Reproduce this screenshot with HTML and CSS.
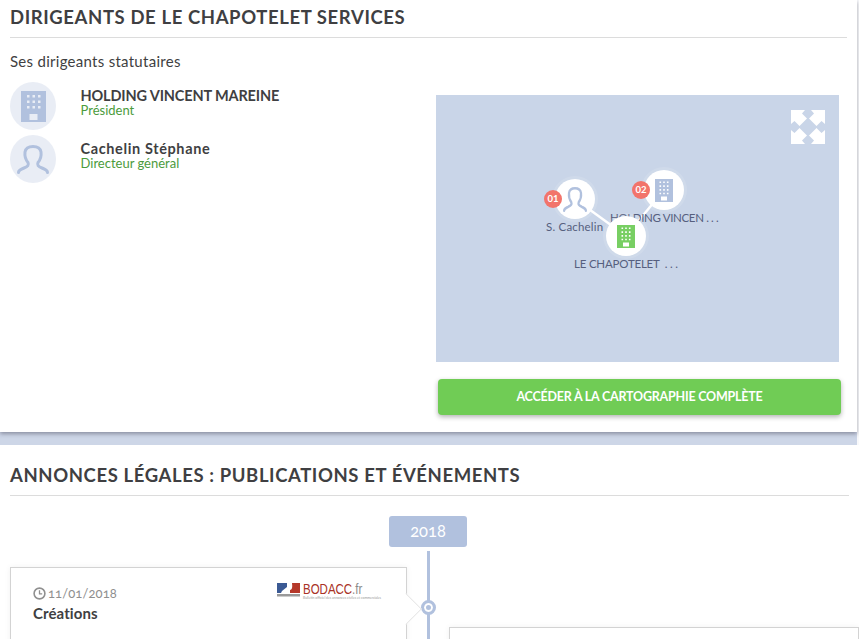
FILE: index.html
```html
<!DOCTYPE html>
<html lang="fr">
<head>
<meta charset="utf-8">
<title>Dirigeants</title>
<link rel="stylesheet" href="styles.css">
</head>
<body>
<svg class="defs" width="0" height="0" aria-hidden="true">
  <defs>
    <g id="building">
      <path d="M0 0H25V31H0Z M6 4v2.500h2.500V4Z M11.500 4v2.500h2.500V4Z M17 4v2.500h2.500V4Z M6 9.500v2.500h2.500V9.500Z M11.500 9.500v2.500h2.500V9.500Z M17 9.500v2.500h2.500V9.500Z M6 15v2.500h2.500V15Z M11.500 15v2.500h2.500V15Z M17 15v2.500h2.500V15Z M8.500 23v6h8v-6Z" fill-rule="evenodd"/>
    </g>
    <g id="building-small">
      <path d="M0 0H18V23H0Z M4.500 2.500v1.600h1.600V2.500Z M8.200 2.500v1.600h1.600V2.500Z M11.900 2.500v1.600h1.600V2.500Z M4.500 6.300v1.600h1.600V6.300Z M8.200 6.300v1.600h1.600V6.300Z M11.900 6.300v1.600h1.600V6.300Z M4.500 10.100v1.600h1.600v-1.600Z M8.200 10.100v1.600h1.600v-1.600Z M11.900 10.100v1.600h1.600v-1.600Z M4.500 13.700v1.600h1.600v-1.600Z M8.200 13.700v1.600h1.600v-1.600Z M11.900 13.700v1.600h1.600v-1.600Z M6 17.500v4h6v-4Z" fill-rule="evenodd"/>
    </g>
    <g id="person">
      <path d="M1.500 27.500 C1.500 25 3.500 24.500 7 23 C11 21.500 12 20 11 17.500 C8.500 14.500 7.500 11 8 7 C8.700 3 11.500 1.500 16 1.500 C20.500 1.500 23.300 3 24 7 C24.500 11 23.500 14.500 21 17.500 C20 20 21 21.500 25 23 C28.500 24.500 30.500 25 30.500 27.500" fill="none" stroke-width="3" stroke-linecap="round" stroke-linejoin="round"/>
    </g>
  </defs>
</svg>
<section class="panel panel-top">
  <h2 class="title">DIRIGEANTS DE LE CHAPOTELET SERVICES</h2>
  <div class="columns">
    <div class="col-left">
      <p class="lead">Ses dirigeants statutaires</p>
      <div class="person">
        <div class="avatar"><svg class="ic-building" width="25" height="31" viewBox="0 0 25 31"><use href="#building"/></svg></div>
        <div class="who"><div class="name">HOLDING VINCENT MAREINE</div><div class="role">Président</div></div>
      </div>
      <div class="person">
        <div class="avatar"><svg class="ic-person" width="32" height="29" viewBox="0 0 32 29"><use href="#person"/></svg></div>
        <div class="who"><div class="name name-mixed">Cachelin Stéphane</div><div class="role">Directeur général</div></div>
      </div>
    </div>
    <div class="col-right">
      <div class="map">
        <svg class="expand" width="34" height="34" viewBox="0 0 34 34"><path d="M0 0H14L11 3.500L16 8.500L8.500 16L3.500 11L0 14Z M34 0H20L23 3.500L18 8.500L25.500 16L30.500 11L34 14Z M0 34H14L11 30.500L16 25.500L8.500 18L3.500 23L0 20Z M34 34H20L23 30.500L18 25.500L25.500 18L30.500 23L34 20Z"/></svg>
        <svg class="links" width="403" height="267" viewBox="0 0 403 267"><path d="M139 104L190 141M228 95L190 141"/></svg>
        <div class="label caps l-holding">HOLDING VINCEN . . .</div>
        <div class="label l-cachelin">S. Cachelin</div>
        <div class="node n-cachelin"><svg class="ic-person" width="24" height="25" viewBox="0 0 32 29" preserveAspectRatio="none"><use href="#person"/></svg></div>
        <div class="node n-holding"><svg class="ic-building" width="18" height="23" viewBox="0 0 18 23"><use href="#building-small"/></svg></div>
        <div class="node n-center"><svg class="ic-green" width="18" height="23" viewBox="0 0 18 23"><use href="#building-small"/></svg></div>
        <div class="badge b-01">01</div>
        <div class="badge b-02">02</div>
        <div class="label caps-center l-center">LE CHAPOTELET &nbsp;. . .</div>
      </div>
      <a class="cta">ACCÉDER À LA CARTOGRAPHIE COMPLÈTE</a>
    </div>
  </div>
</section>
<div class="band"></div>
<section class="panel panel-bottom">
  <h2 class="title">ANNONCES LÉGALES : PUBLICATIONS ET ÉVÉNEMENTS</h2>
  <div class="timeline">
    <div class="year">2018</div>
    <div class="rail"></div>
    <div class="dot"></div>
    <article class="event event-left">
      <div class="event-head">
        <div class="date">
          <svg width="13" height="13" viewBox="0 0 13 13"><circle cx="6.500" cy="6.500" r="5.400" fill="none" stroke="#8f8f8f" stroke-width="1.600"/><path d="M6.500 3.200V6.800H9.200" fill="none" stroke="#8f8f8f" stroke-width="1.300"/></svg>
          <span>11/01/2018</span>
        </div>
        <div class="bodacc">
          <svg width="23" height="14" viewBox="0 0 23 14"><rect width="10" height="10" fill="#3b5a94"/><path d="M5 8L10 4V10H4Z" fill="#fff"/><path d="M15 0H23V10H13V7Q16 7 15 0Z" fill="#b5382a"/><rect y="11" width="23" height="2.500" fill="#9a9a9a"/></svg>
          <div class="bodacc-text"><div class="bodacc-word"><b>BODACC</b><span>.fr</span></div><div class="bodacc-sub">Bulletin officiel des annonces civiles et commerciales</div></div>
        </div>
      </div>
      <div class="event-title">Créations</div>
      <div class="arrow"></div>
    </article>
    <article class="event event-right"></article>
  </div>
</section>
</body>
</html>
```
FILE: styles.css
```css
* { box-sizing: border-box; }
html, body { margin: 0; height: 639px; overflow: hidden; }
body { background: #f8f9fb; font-family: "Lato", "Liberation Sans", sans-serif; color: #3f3f42; }
.defs { position: absolute; }
.panel { background: #fff; width: 857px; padding: 0 10px; }
.panel-top { height: 432px; box-shadow: 0 2px 4px rgba(60,60,80,.45); position: relative; }
.band { width: 857px; height: 13px; background: #cdd6e7; }
.panel-bottom { height: 194px; width: 859px; }
.title { margin: 0; height: 38px; padding-top: 6px; border-bottom: 1px solid #dcdcdc; font-size: 18.500px; line-height: 22px; font-weight: 700; letter-spacing: .6px; white-space: nowrap; }
.panel-bottom .title { height: 51px; padding-top: 19px; }
.columns { display: flex; }
.col-left { width: 426px; }
.lead { margin: 14px 0 12px; font-size: 15px; line-height: 18px; letter-spacing: .28px; }
.person { display: flex; height: 53px; }
.avatar { width: 46px; height: 48px; border-radius: 50%; background: #e9edf5; display: flex; align-items: center; justify-content: center; margin-right: 25px; flex: none; }
.ic-building { fill: #b1c1de; }
.ic-person { stroke: #b1c1de; }
.ic-green { fill: #78cf63; }
.who { padding-top: 5px; margin-left: -.5px; }
.name { font-size: 14.500px; line-height: 17px; font-weight: 700; letter-spacing: -.15px; white-space: nowrap; }
.name-mixed { letter-spacing: .62px; }
.role { font-size: 13px; line-height: 13px; color: #4b9b3c; }
.col-right { width: 405px; padding-top: 57px; }
.map { position: relative; width: 403px; height: 267px; background: #c9d5e8; overflow: hidden; }
.expand { position: absolute; left: 355px; top: 15px; fill: #fff; }
.links { position: absolute; left: 0; top: 0; stroke: #fff; stroke-width: 2.500; fill: none; }
.node { position: absolute; width: 40px; height: 40px; border-radius: 50%; background: #fff; display: flex; align-items: center; justify-content: center; box-shadow: 0 0 0 3px rgba(255,255,255,.12); }
.n-cachelin { left: 119px; top: 84px; }
.n-holding { left: 208px; top: 75px; }
.n-center { left: 170px; top: 121px; }
.badge { position: absolute; width: 18px; height: 18px; border-radius: 50%; background: #f2746b; color: #fff; font-size: 9.500px; line-height: 18px; font-weight: 700; text-align: center; }
.b-01 { left: 108px; top: 95px; }
.b-02 { left: 196px; top: 86px; }
.label { position: absolute; font-size: 11.500px; line-height: 14px; color: #565f7e; white-space: nowrap; letter-spacing: .2px; }
.caps { letter-spacing: -.35px; }
.caps-center { letter-spacing: -.2px; }
.l-holding { left: 174px; top: 116px; }
.l-cachelin { left: 110px; top: 125px; }
.l-center { left: 138px; top: 162px; }
.cta { display: block; margin: 17px 0 0 2px; width: 403px; height: 36px; border-radius: 4px; background: #70cc55; color: #fff; font-size: 12.500px; line-height: 36px; font-weight: 700; text-align: center; letter-spacing: -.22px; box-shadow: 0 2px 5px rgba(0,0,0,.3); white-space: nowrap; }
.timeline { position: relative; height: 143px; }
.year { position: absolute; left: 379px; top: 20px; width: 78px; height: 31px; border-radius: 3px; background: #b1c1de; color: #fff; font-size: 16.500px; line-height: 31px; text-align: center; font-variant-numeric: oldstyle-nums; }
.rail { position: absolute; left: 417px; top: 55px; bottom: 0; width: 3px; background: #b1c1de; }
.dot { position: absolute; left: 411px; top: 104px; width: 15px; height: 15px; border-radius: 50%; background: #fff; border: 3px solid #b1c1de; box-shadow: inset 0 0 0 2px #fff, inset 0 0 0 6px #b1c1de; }
.event { position: absolute; background: #fff; border: 1px solid #d3d3d3; box-shadow: 0 0 6px rgba(0,0,0,.06); }
.event-left { left: 0; top: 71px; width: 397px; height: 90px; padding: 16px 22px; }
.event-right { left: 439px; top: 131px; width: 410px; height: 40px; }
.event-head { display: flex; justify-content: space-between; }
.date { display: flex; align-items: center; gap: 2px; font-size: 13px; line-height: 18px; color: #8f8f8f; font-variant-numeric: oldstyle-nums; letter-spacing: .1px; }
.bodacc { display: flex; gap: 3px; margin-top: -1px; margin-right: 1px; }
.bodacc-text { width: 80px; }
.bodacc-word { font-family: "Liberation Sans", sans-serif; font-size: 14px; line-height: 12px; height: 12px; transform: scaleX(.82); transform-origin: left center; white-space: nowrap; }
.bodacc-word b { font-weight: 400; color: #a93226; }
.bodacc-word span { color: #8b8b8b; }
.bodacc-sub { font-size: 3.400px; line-height: 4px; color: #999; white-space: nowrap; margin-top: 1px; }
.event-title { font-size: 15px; line-height: 18px; font-weight: 700; margin-top: 2px; letter-spacing: .1px; }
.arrow { position: absolute; right: -14px; top: 27px; width: 28px; height: 28px; background: #fff; border-top: 1px solid #e2e2e2; border-right: 1px solid #e2e2e2; transform: rotate(45deg) scale(.8); }
```
